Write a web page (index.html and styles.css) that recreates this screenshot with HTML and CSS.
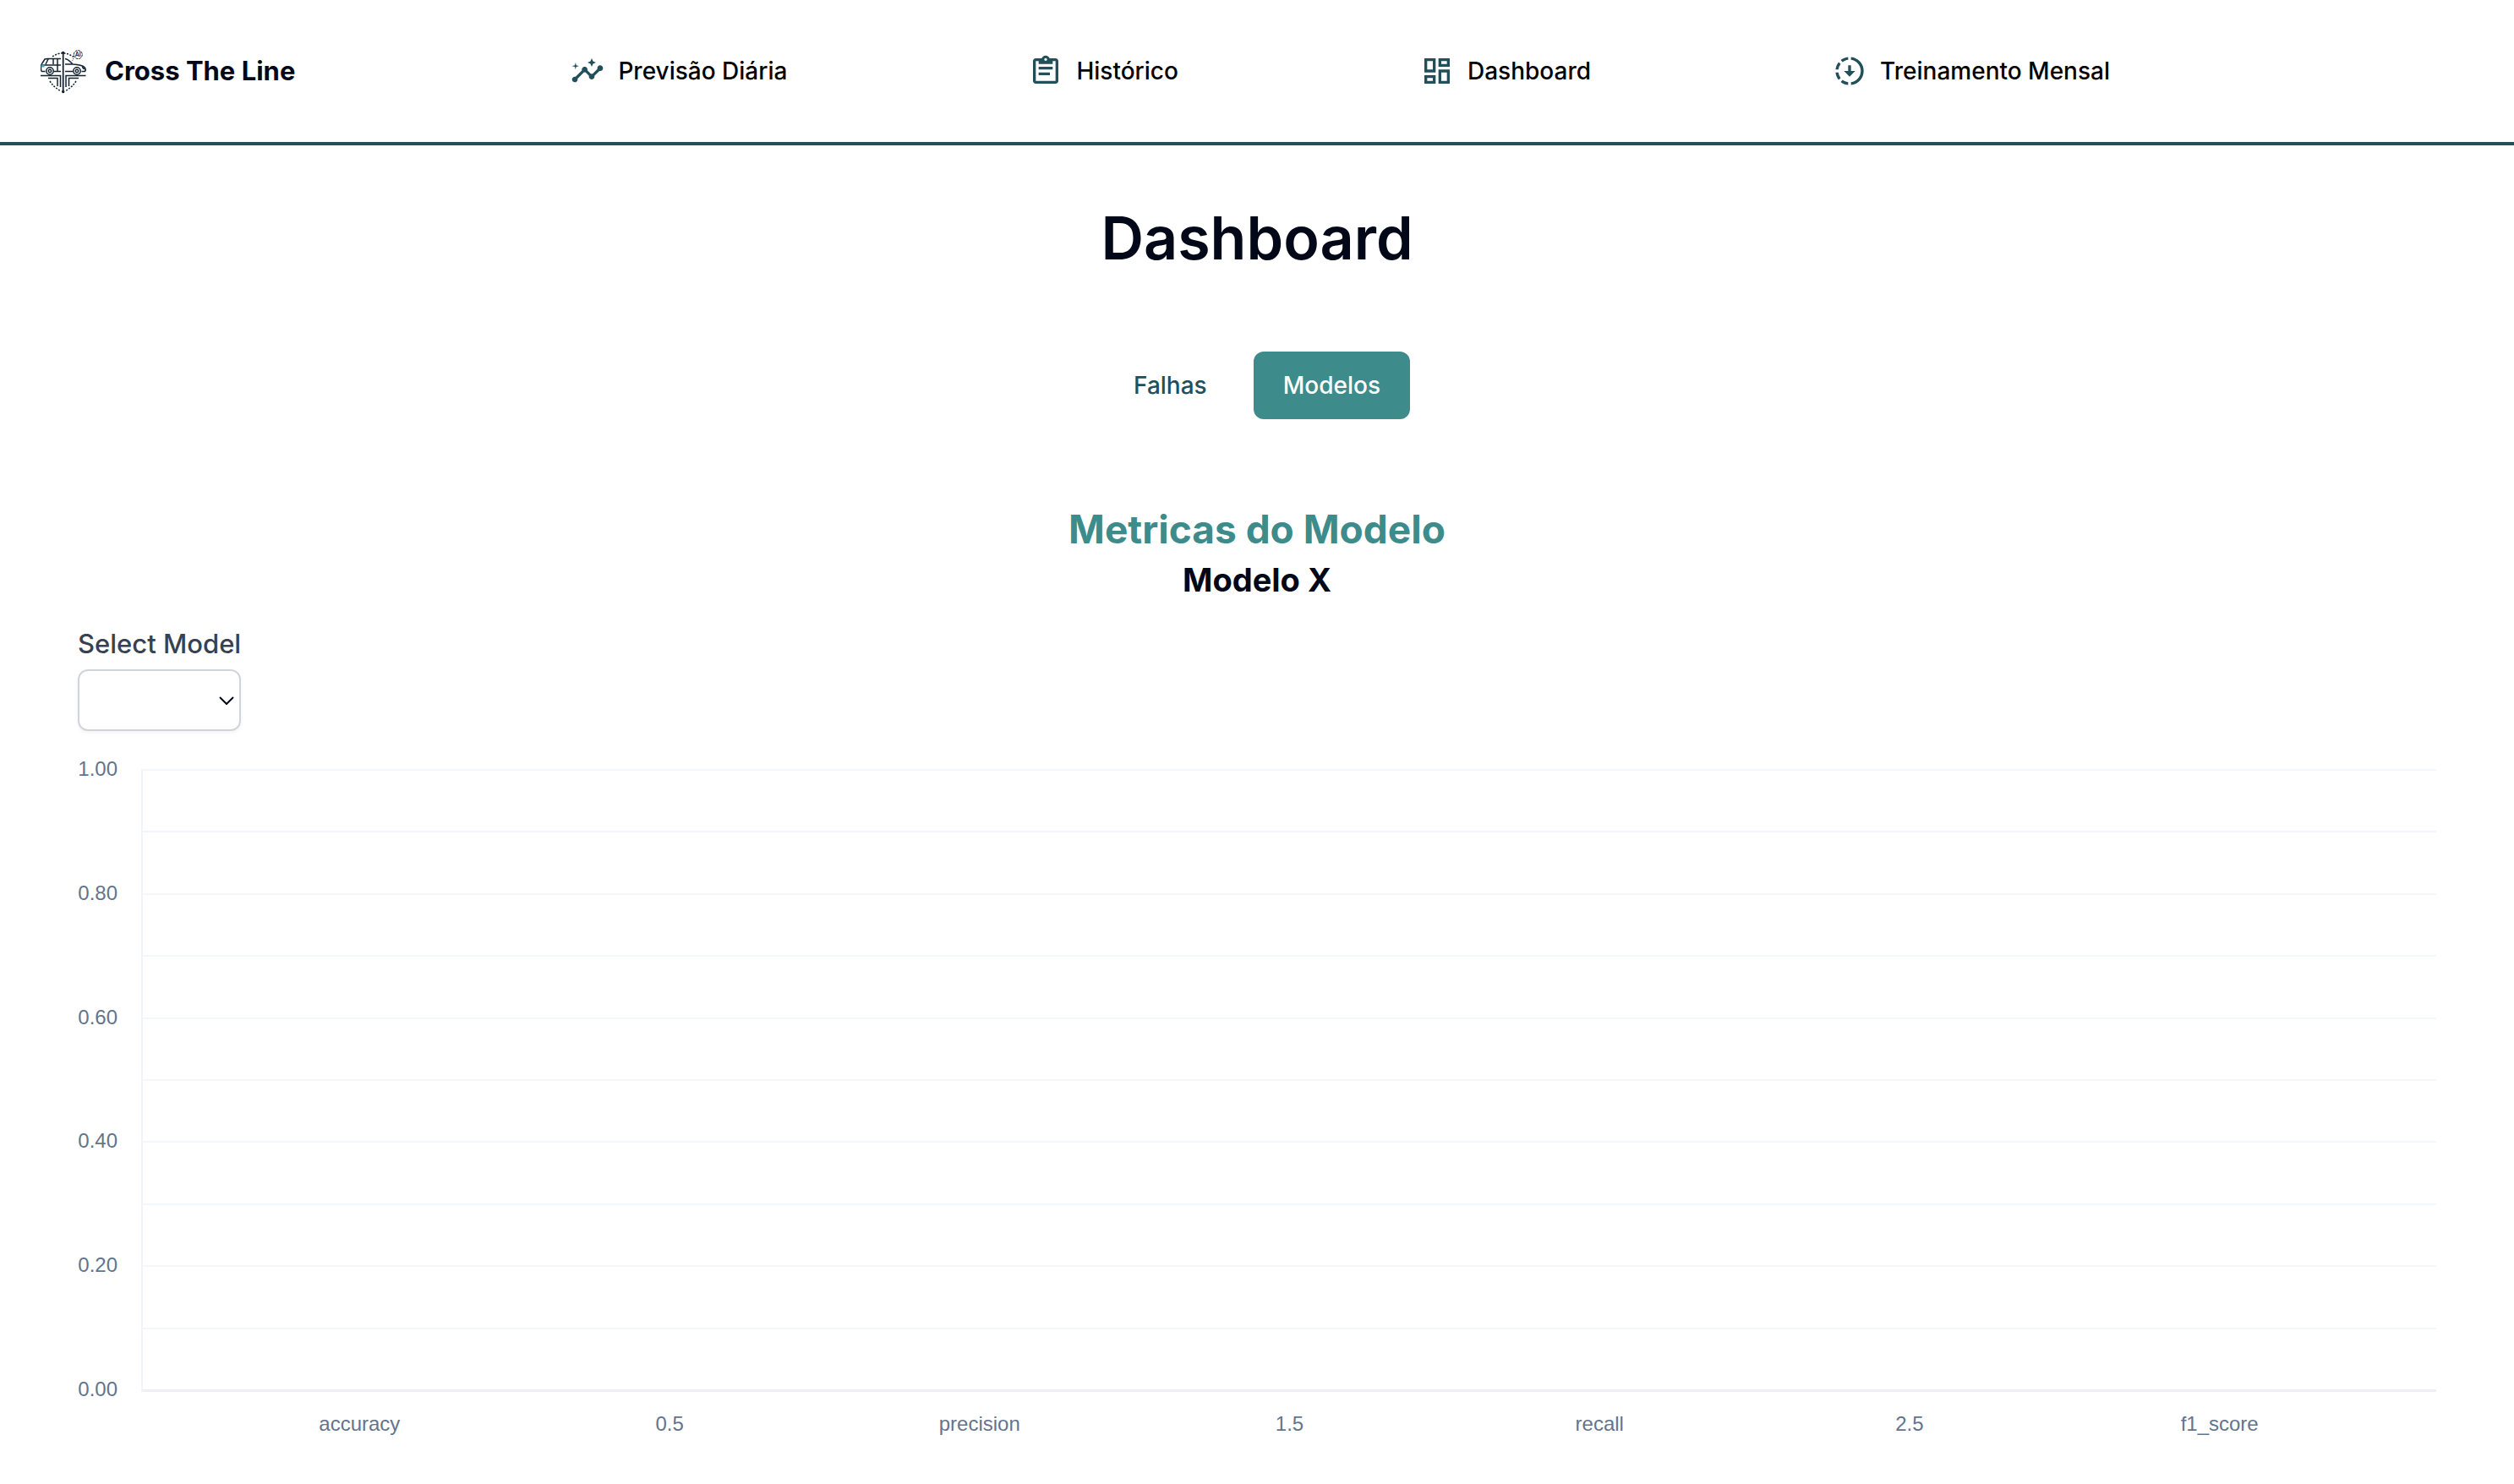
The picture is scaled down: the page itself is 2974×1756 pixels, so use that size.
FILE: index.html
```html
<!DOCTYPE html>
<html lang="pt-BR">
<head>
<meta charset="utf-8">
<meta name="viewport" content="width=device-width, initial-scale=1">
<title>Cross The Line</title>
<link rel="stylesheet" href="styles.css">
</head>
<body>
<header class="header">
  <a class="brand" href="#">
    <svg class="brand-logo" viewBox="8 6 58 56" fill="none" stroke="#142433" stroke-width="1.5" aria-hidden="true">
      <path d="M22 17C27 13.5 31 12.8 34 12.8S43 14 47 17.5M19 46c4 6 8 9 13 12M50 46c-4 6-8 9-13 12" stroke-dasharray="2 1.6"/>
      <path d="M34.7 12v47" stroke-width="1.8"/>
      <circle cx="34.7" cy="12.5" r="1" fill="#142433"/><circle cx="34.7" cy="58.5" r="1" fill="#142433"/>
      <path d="M13.500 34.500H9.500c-1.500-1-1.300-8 .3-9.500L13 20l3-.5h16M14 26l3-6M9 27h23M23 20v6M28 20v14M23.500 34.500H32"/>
      <path d="M9 26.500h3.500v3H8.500z" fill="#49a3b8" stroke="none"/>
      <circle cx="19" cy="34" r="4.200"/><circle cx="19" cy="34" r="1.700"/>
      <path d="M37 19.500c4 .5 6 3.500 9 6.500 6 .4 11 .8 14 3.500 1.500 2 1.300 4 .5 5h-4M46 34.500H37M37 26h9M57 28l1.500 3 3 .5"/>
      <circle cx="51" cy="34" r="4.200"/><circle cx="51" cy="34" r="1.700"/>
      <path d="M8 39.600h23.500V53M38 53V39.600h23.500M28 52V42.500H17M41.500 52V42.500H53"/>
      <circle cx="52.300" cy="14.600" r="5" stroke-width="1" stroke-dasharray="3 .8"/>
      <path d="M47 19l-1.500 3" stroke-width="1" stroke-dasharray="1 1"/>
      <text class="logo-text" x="52.300" y="17" text-anchor="middle">AI</text>
    </svg>
    <span>Cross The Line</span>
  </a>
  <nav class="nav">
    <a class="nav-link" href="#">
      <svg class="icon" viewBox="0 0 24 24" aria-hidden="true"><path d="M21 8c-1.450 0-2.260 1.440-1.930 2.510l-3.550 3.560c-.3-.09-.74-.09-1.040 0l-2.550-2.550C12.270 10.450 11.460 9 10 9c-1.450 0-2.270 1.440-1.930 2.520l-4.560 4.550C2.440 15.740 1 16.550 1 18c0 1.100.9 2 2 2 1.450 0 2.260-1.440 1.930-2.510l4.550-4.560c.3.09.74.09 1.040 0l2.550 2.550C12.730 16.550 13.540 18 15 18c1.450 0 2.270-1.440 1.930-2.520l3.560-3.550C21.560 12.260 23 11.450 23 10c0-1.100-.9-2-2-2z"/><path d="M15 9l.94-2.070L18 6l-2.060-.93L15 3l-.92 2.070L12 6l2.080.93zM3.500 11L4 9l2-.5L4 8l-.5-2L3 8l-2 .5L3 9z"/></svg>
      <span>Previsão Diária</span>
    </a>
    <a class="nav-link" href="#">
      <svg class="icon" viewBox="0 0 24 24" aria-hidden="true"><path fill-rule="evenodd" d="M19 3h-4.180C14.400 1.840 13.300 1 12 1s-2.400.84-2.820 2H5c-1.100 0-2 .9-2 2v14c0 1.100.9 2 2 2h14c1.100 0 2-.9 2-2V5c0-1.100-.9-2-2-2zm-7-.2a1 1 0 1 1 0 2 1 1 0 0 1 0-2zM19 19H5V5h2v2h10V5h2z"/><path d="M7 9h10v2H7zM7 13h8v2H7z"/></svg>
      <span>Histórico</span>
    </a>
    <a class="nav-link" href="#">
      <svg class="icon" viewBox="0 0 24 24" aria-hidden="true"><path d="M19 5v2h-4V5h4M9 5v6H5V5h4m10 8v6h-4v-6h4M9 17v2H5v-2h4M21 3h-8v6h8V3zM11 3H3v10h8V3zm10 8h-8v10h8V11zm-10 4H3v6h8v-6z"/></svg>
      <span>Dashboard</span>
    </a>
    <a class="nav-link" href="#">
      <svg class="icon" viewBox="0 0 24 24" aria-hidden="true"><path d="M13 2.050v2.020a8 8 0 0 1 0 15.860v2.020a10 10 0 0 0 0-19.900zM11 2.050v2.020c-1.460.18-2.790.76-3.900 1.620L5.680 4.260C7.160 3.050 8.990 2.250 11 2.050zM4.260 5.680L5.690 7.100A7.940 7.940 0 0 0 4.070 11H2.050c.2-2.010 1-3.840 2.210-5.320zM11 21.950v-2.020c-1.460-.18-2.790-.76-3.900-1.620l-1.420 1.430c1.480 1.210 3.310 2.010 5.320 2.210zM4.260 18.320l1.430-1.420A7.940 7.940 0 0 1 4.070 13H2.050c.2 2.010 1 3.840 2.210 5.320zM13 12V8h-2v4H8l4 4 4-4z"/></svg>
      <span>Treinamento Mensal</span>
    </a>
  </nav>
</header>
<main class="main">
  <h1 class="title">Dashboard</h1>
  <div class="tabs">
    <button class="tab" type="button">Falhas</button>
    <button class="tab tab-active" type="button">Modelos</button>
  </div>
  <h2 class="subtitle">Metricas do Modelo</h2>
  <h3 class="model-name">Modelo X</h3>
  <div class="field">
    <label class="field-label" for="model">Select Model</label>
    <div class="select-wrap">
      <select class="select" id="model"></select>
      <svg class="chevron" viewBox="0 0 18 10" aria-hidden="true"><path d="M1 1l8 8 8-8"/></svg>
    </div>
  </div>
  <section class="chart" aria-label="Metricas do Modelo">
    <div class="y-axis">
      <span>1.00</span><span>0.80</span><span>0.60</span><span>0.40</span><span>0.20</span><span>0.00</span>
    </div>
    <div class="plot">
      <i></i><i></i><i></i><i></i><i></i><i></i><i></i><i></i><i></i><i></i>
    </div>
    <div class="x-axis">
      <span>accuracy</span><span>0.5</span><span>precision</span><span>1.5</span><span>recall</span><span>2.5</span><span>f1_score</span>
    </div>
  </section>
</main>
</body>
</html>
```
FILE: styles.css
```css
* {
  box-sizing: border-box;
}

body {
  margin: 0;
  background: #fff;
  color: #020817;
  font-family: Inter, "Liberation Sans", sans-serif;
  font-size: 28px;
  line-height: 40px;
}

h1, h2, h3 {
  margin: 0;
  text-align: center;
}

a {
  color: inherit;
  text-decoration: none;
}

.header {
  display: flex;
  align-items: center;
  height: 172px;
  padding: 0 48px;
  border-bottom: 4px solid #22505a;
}

.brand {
  display: flex;
  align-items: center;
  gap: 18px;
  font-size: 31px;
  font-weight: 700;
}

.brand-logo {
  width: 58px;
  height: 56px;
}

.logo-text {
  font-size: 7px;
  font-weight: 600;
  fill: #142433;
  stroke: none;
}

.nav {
  flex: 1;
  display: flex;
  justify-content: space-between;
  padding: 0 430px 0 326px;
}

.nav-link {
  display: flex;
  align-items: center;
  gap: 16px;
  color: #000;
  font-weight: 500;
}

.icon {
  width: 40px;
  height: 40px;
  fill: #22505a;
}

.main {
  padding: 70px 92px 48px;
}

.title {
  font-size: 70px;
  font-weight: 600;
  line-height: 80px;
}

.tabs {
  display: flex;
  justify-content: center;
  gap: 20px;
  margin: 94px 0 98px;
}

.tab {
  height: 80px;
  padding: 0 35px;
  border: 0;
  border-radius: 12px;
  background: transparent;
  color: #22505a;
  font: inherit;
  font-weight: 500;
}

.tab-active {
  background: #3d8b8a;
  color: #fff;
}

.subtitle {
  color: #3d8b8a;
  font-size: 46px;
  font-weight: 700;
  line-height: 64px;
}

.model-name {
  font-size: 38px;
  font-weight: 700;
  line-height: 56px;
}

.field {
  display: inline-flex;
  flex-direction: column;
  gap: 6px;
  margin: 24px 0 45px;
}

.field-label {
  color: #374151;
  font-size: 31px;
  font-weight: 500;
  line-height: 48px;
}

.select-wrap {
  display: grid;
  align-items: center;
}

.select,
.chevron {
  grid-area: 1 / 1;
}

.select {
  width: 100%;
  height: 73px;
  border: 2px solid #d1d5db;
  border-radius: 12px;
  background: #fff;
  box-shadow: 0 2px 4px rgba(0, 0, 0, .05);
  appearance: none;
}

.chevron {
  justify-self: end;
  width: 18px;
  height: 10px;
  margin-right: 8px;
  fill: none;
  stroke: #020817;
  stroke-width: 2;
  pointer-events: none;
}

.chart {
  display: grid;
  grid-template-columns: 47px 1fr;
  column-gap: 28px;
  color: #64748b;
  font-family: "Liberation Sans", Arial, sans-serif;
  font-size: 24px;
  line-height: 28px;
}

.y-axis {
  display: flex;
  flex-direction: column;
  justify-content: space-between;
  margin: -14px 0 -11px;
  text-align: right;
}

.plot {
  display: grid;
  grid-template-rows: repeat(10, 1fr);
  height: 737px;
  border-left: 2px solid #f1f5f9;
  border-bottom: 3px solid #eceff3;
}

.plot i {
  border-top: 2px solid #f3f6fa;
}

.x-axis {
  grid-column: 2;
  display: flex;
  padding: 24px 73px 0 75px;
}

.x-axis span {
  flex: 1;
  text-align: center;
}
```
